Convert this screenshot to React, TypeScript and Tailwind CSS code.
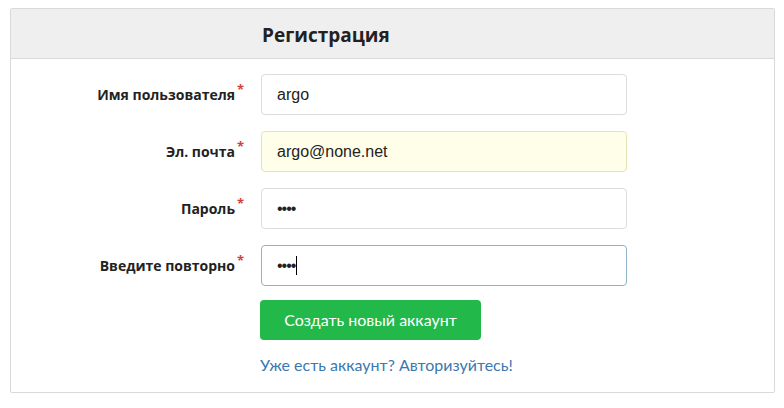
const labelFont = { fontFamily: '"Open Sans", "Noto Sans", sans-serif' };

function Field({ label, children, className }: { label: string; children: React.ReactNode; className: string }) {
  return (
    <div className="flex items-center">
      <div className="w-[250px] shrink-0 flex justify-end pr-[26px]">
        <span className="relative text-[14px] font-bold text-[#222]" style={labelFont}>
          {label}
          <span className="absolute -right-[9px] -top-[4px] text-[13px] text-[#d43f3a]">*</span>
        </span>
      </div>
      <div
        className={`w-[366px] h-[41px] rounded-[4px] border flex items-center px-[15px] text-[16px] text-[#222] font-['Liberation_Sans',sans-serif] ${className}`}
      >
        {children}
      </div>
    </div>
  );
}

export default function App() {
  return (
    <div className="w-[784px] h-[408px] bg-white pt-[8px] pl-[10px]">
      <div className="w-[765px] h-[385px] border border-[#d9d9d9] rounded-[2px]">
        <div className="h-[50px] bg-[#efefef] border-b border-[#d9d9d9] flex items-center pl-[251px] pt-[3px]">
          <h1 className="text-[19px] font-bold text-[#222]" style={labelFont}>
            Регистрация
          </h1>
        </div>
        <div className="pt-[15px] flex flex-col gap-[16px]">
          <Field label="Имя пользователя" className="border-[#dcdcdc] bg-white">
            argo
          </Field>
          <Field label="Эл. почта" className="border-[#e4e4bc] bg-[#fefee9]">
            argo@none.net
          </Field>
          <Field label="Пароль" className="border-[#dcdcdc] bg-white">
            <span className="tracking-[-1px]">••••</span>
          </Field>
          <Field label="Введите повторно" className="border-[#8fb3c9] bg-white">
            <span className="tracking-[-1px]">••••</span>
            <span className="w-px h-[19px] bg-black ml-[1px]" />
          </Field>
        </div>
        <div className="pl-[249px] pt-[14px] flex flex-col items-start">
          <button className="h-[40px] w-[221px] rounded-[4px] bg-[#22b84a] text-white text-[16px] font-['Lato',sans-serif]">
            Создать новый аккаунт
          </button>
          <a href="#" className="mt-[13px] text-[16px] text-[#3b78b0] font-['Lato',sans-serif]">
            Уже есть аккаунт? Авторизуйтесь!
          </a>
        </div>
      </div>
    </div>
  );
}
